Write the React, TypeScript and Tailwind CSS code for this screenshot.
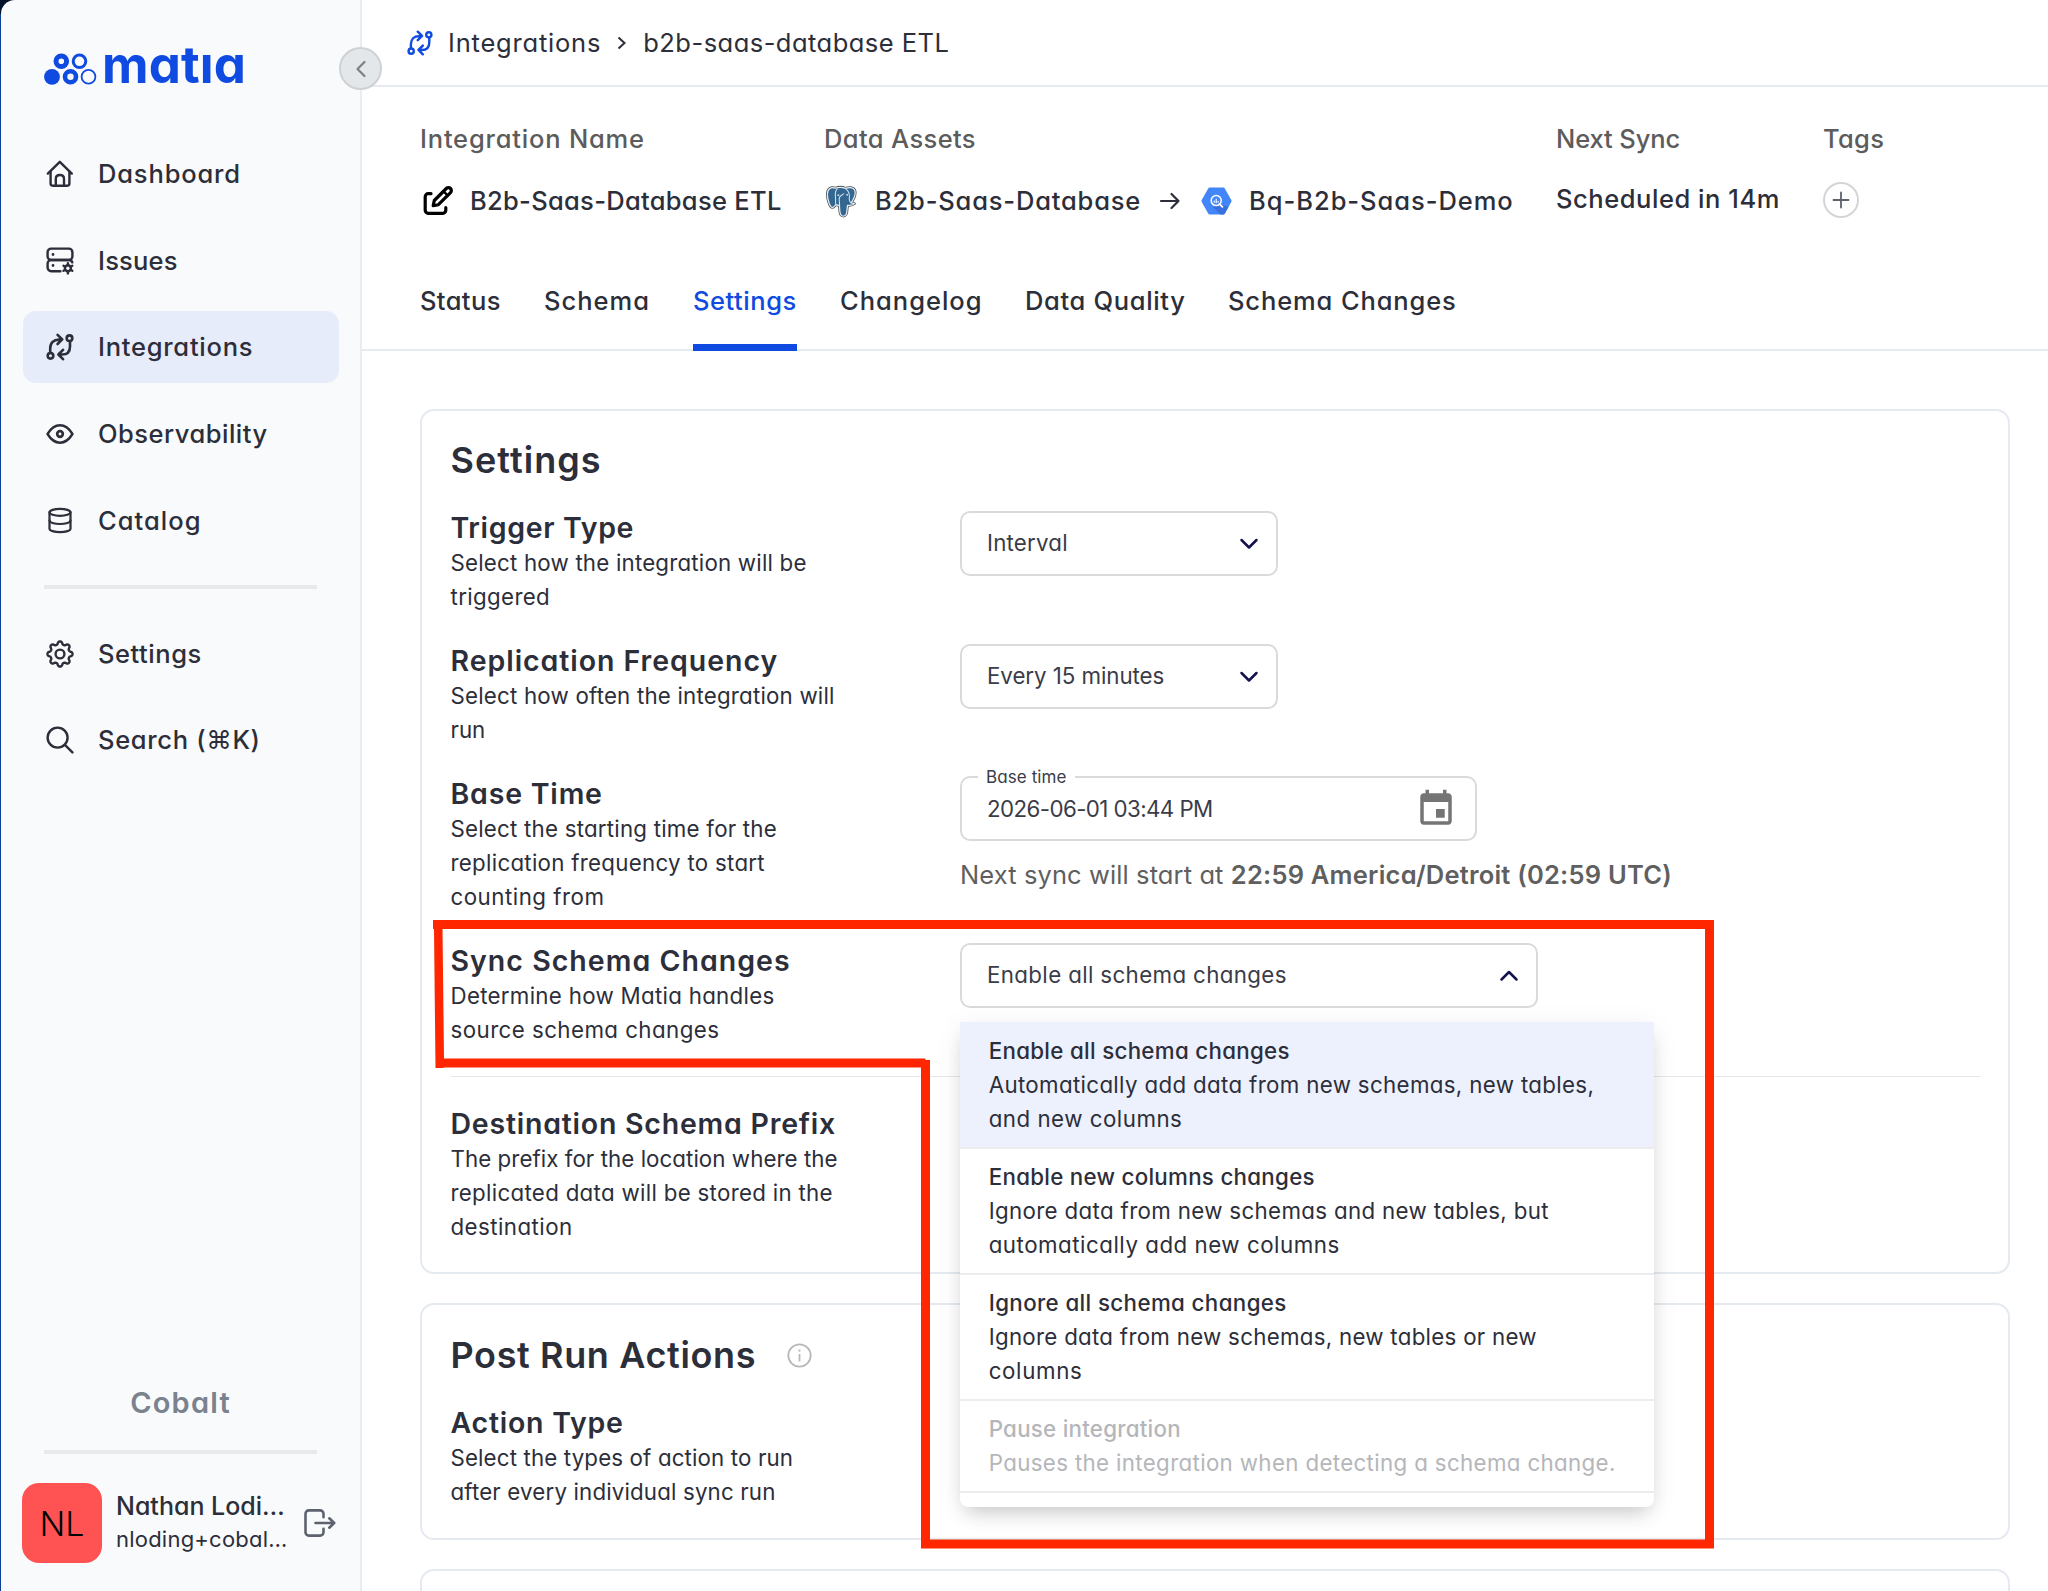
import React from "react";
import { Database } from "lucide-react";

type IconProps = { className?: string };

const stroke = {
  fill: "none",
  stroke: "currentColor",
  strokeWidth: 2.4,
  strokeLinecap: "round" as const,
  strokeLinejoin: "round" as const,
};

function HomeIcon() {
  return (
    <svg width="28" height="28" viewBox="0 0 28 28" {...stroke}>
      <path d="M1.8 13.6 13.8 1.8l12 11.8" />
      <path d="M4.6 11.6v12q0 2.1 2.1 2.1h14.6q2.1 0 2.1-2.1v-12" />
      <path d="M9.8 25.5v-6.6q0-3.9 4.1-3.9t4.1 3.9v6.6" />
    </svg>
  );
}

function IssuesIcon() {
  return (
    <svg width="28" height="28" viewBox="0 0 28 28" {...stroke}>
      <rect x="1.6" y="1.6" width="24.8" height="11.4" rx="3.6" />
      <path d="M14.4 24.2H5.2a3.6 3.6 0 0 1-3.6-3.6v-4a3.6 3.6 0 0 1 3.6-3.6h17.6c1.8 0 3.1 1 3.5 2.4" />
      <path d="M7 7.4v.1M7 18.5v.1" strokeWidth="2.8" />
      <circle cx="21.9" cy="21.3" r="3" strokeWidth="2.4" />
      <path d="M21.9 16.2v2M21.9 24.4v2M17.5 18.8l1.7 1M24.6 22.8l1.7 1M17.5 23.8l1.7-1M24.6 19.8l1.7-1" strokeWidth="2.4" />
    </svg>
  );
}

function IntegrationsIcon({ className = "size-7" }: IconProps) {
  return (
    <svg className={className} viewBox="0 0 28 28" {...stroke} strokeWidth={2.6}>
      <circle cx="4.5" cy="22.8" r="2.8" />
      <circle cx="23.5" cy="5.2" r="2.8" />
      <path d="M4.2 19.6v-4.2c0-5.6 3.4-8.8 8.8-8.8h2.4M11.6 1.8l4.6 4.6-4.6 4.6" />
      <path d="M24 8.4v5c0 5.2-3 8.1-8 8.1h-3.4M17 16.8l-4.6 4.7 4.6 4.7" />
    </svg>
  );
}

function EyeIcon() {
  return (
    <svg width="28" height="28" viewBox="0 0 28 28" {...stroke}>
      <path d="M1.5 14C5 8.3 9.3 5.3 14 5.3S23 8.3 26.5 14C23 19.7 18.7 22.7 14 22.7S5 19.7 1.5 14Z" />
      <circle cx="14" cy="14" r="2.8" strokeWidth="2.7" />
    </svg>
  );
}

function gearPath(): string {
  const points: string[] = [];
  for (let i = 0; i < 160; i++) {
    const a = (i / 160) * Math.PI * 2;
    const wave = Math.tanh(Math.cos(a * 8) * 1.4);
    const r = 11.1 + wave * 1.6;
    points.push(`${(14 + r * Math.cos(a)).toFixed(2)} ${(14 + r * Math.sin(a)).toFixed(2)}`);
  }
  return `M${points.join("L")}Z`;
}

function GearIcon() {
  return (
    <svg width="28" height="28" viewBox="0 0 28 28" {...stroke}>
      <path d={gearPath()} />
      <circle cx="14" cy="14" r="4.4" />
    </svg>
  );
}

function SearchIcon() {
  return (
    <svg width="28" height="28" viewBox="0 0 28 28" {...stroke}>
      <circle cx="11.6" cy="11.6" r="10" />
      <path d="m18.9 18.9 7.5 7.5" />
    </svg>
  );
}

function LogoutIcon() {
  return (
    <svg width="32" height="28" viewBox="0 0 32 28" {...stroke} strokeWidth={2.6}>
      <path d="M19.5 8.2V4.7a3.3 3.3 0 0 0-3.3-3.3H4.8a3.3 3.3 0 0 0-3.3 3.3v18.6a3.3 3.3 0 0 0 3.3 3.3h11.4a3.3 3.3 0 0 0 3.3-3.3v-3.5" />
      <path d="M11.5 14h18.7M25.300 9.300 30.200 14l-4.900 4.700" />
    </svg>
  );
}

function EditIcon() {
  return (
    <svg className="text-black" width="34" height="34" viewBox="0 0 34 34" {...stroke} strokeWidth={3.2}>
      <path d="M10 9.7H7.200a3 3 0 0 0-3 3v13.600a3 3 0 0 0 3 3h14.600a3 3 0 0 0 3-3v-2.600" />
      <path d="M12.200 21.700 13.300 16.500 25.300 4.500a2.900 2.900 0 0 1 4.200 4.200L17.400 20.700Z" />
      <path d="m22.600 7.400 4 4" strokeWidth="2.400" />
    </svg>
  );
}

function LogoMark() {
  return (
    <svg width="53" height="33" viewBox="0 0 53 33" fill="none" stroke="#0f4be0">
      <circle cx="17.3" cy="8.3" r="5.3" strokeWidth="5" />
      <circle cx="35.5" cy="8.3" r="6.3" strokeWidth="3" />
      <circle cx="8" cy="23.8" r="7.9" fill="#0f4be0" stroke="none" />
      <circle cx="26.5" cy="23.8" r="5.5" strokeWidth="4.6" />
      <circle cx="44.5" cy="23.8" r="6.9" strokeWidth="1.8" />
    </svg>
  );
}

function Chevron({ up = false }: { up?: boolean }) {
  return (
    <svg width="20" height="12" viewBox="0 0 20 12" fill="none" stroke="#14124d" strokeWidth="2.5" strokeLinecap="round" strokeLinejoin="round">
      <path d={up ? "M2.5 9.5 10 2l7.5 7.5" : "M2.5 2 10 9.5 17.5 2"} />
    </svg>
  );
}

function BigQueryIcon() {
  return (
    <svg width="31" height="28" viewBox="0 0 31 28">
      <path d="M8.7.5h13.6q1 0 1.500.9l6.500 11.700q.5.9 0 1.800l-6.500 11.700q-.5.9-1.500.9H8.700q-1 0-1.500-.9L.7 14.900q-.5-.9 0-1.800L7.200 1.400Q7.700.5 8.700.5Z" fill="#4386fa" />
      <path d="m19 17 8.500 3-3.700 6.600q-.5.9-1.500.9h-3L12 20Z" fill="#3871dd" />
      <circle cx="15.200" cy="13.600" r="5" fill="none" stroke="#fff" strokeWidth="1.500" />
      <path d="M13.300 13.500v2.300M15.200 11.800v4.400M17.100 14v1.700" stroke="#fff" strokeWidth="1.100" />
      <path d="m18.900 17.300 2.500 2.600" stroke="#fff" strokeWidth="1.800" strokeLinecap="round" />
    </svg>
  );
}

const elephant =
  "M9.500 2.600C5.500 1 1.800 3 1.800 8.500c0 5 2.500 12.800 4.800 12.800 1.500 0 2.400-1.600 3.600-2.900.8.6 2 .9 3.300.7.3 3-.2 8.500 2 9.900 2 1.200 4.500.5 5-2.500l.8-7.300c2.500.2 5.500-.3 6.700-1.600-.6-.8-2.200-.5-3.200-.8 2.500-3.700 4.700-9.300 3.500-12.300-1.300-3-5.700-3-8.800-1.700C16.500 1.500 12.500 1.500 9.500 2.600Z";

function PostgresIcon() {
  return (
    <svg width="32" height="33" viewBox="-.5 -.5 31 32" strokeLinejoin="round" strokeLinecap="round">
      <path d={elephant} fill="none" stroke="#4b4f55" strokeWidth="2.7" />
      <path d={elephant} fill="#336791" stroke="#e6edf3" strokeWidth="1.2" />
      <path
        d="M11.300 3.400c-2.600 2.400-2 6-1.600 8.600.4 3-.6 4.700.5 6.300M19.200 2.800c3 2.400 4.300 5.200 3.900 8.200-.4 3-.5 4.400 1.600 5.600M13.600 18.900c.2-2.700-.9-5.200-.1-7.300.9-2.300 3-2.300 4.100-3.600"
        fill="none"
        stroke="#dce6ee"
        strokeWidth="1"
      />
      <path d="M12 9.300h.8M20.600 9h.8" stroke="#fff" strokeWidth="1.300" />
    </svg>
  );
}

type NavEntry = { label: React.ReactNode; id: string; icon: React.ReactNode; track: string; active?: boolean };

const navItems: NavEntry[] = [
  { id: "dashboard", label: "Dashboard", icon: <HomeIcon />, track: "tracking-[0.85px]" },
  { id: "issues", label: "Issues", icon: <IssuesIcon />, track: "tracking-[0.2px]" },
  { id: "integrations", label: "Integrations", icon: <IntegrationsIcon />, track: "tracking-[0.75px]", active: true },
  { id: "observability", label: "Observability", icon: <EyeIcon />, track: "tracking-[0.5px]" },
  { id: "catalog", label: "Catalog", icon: <Database className="size-[31px]" strokeWidth={1.9} />, track: "tracking-[1.05px]" },
];

const utilityItems: NavEntry[] = [
  { id: "settings", label: "Settings", icon: <GearIcon />, track: "tracking-[0.55px]" },
  {
    id: "search",
    label: (
      <>
        Search (<span className="font-normal">⌘</span>K)
      </>
    ),
    icon: <SearchIcon />,
    track: "tracking-[0.67px]",
  },
];

function NavItem({ label, icon, track, active }: NavEntry) {
  return (
    <div className={`flex h-[71.7px] items-center rounded-[13px] pl-[23.5px] ${active ? "bg-[#e7ecfb]" : ""}`}>
      <span className="flex w-7 shrink-0 justify-center">{icon}</span>
      <span className={`ml-[24px] text-[25.5px] font-medium leading-8 ${track}`}>{label}</span>
    </div>
  );
}

function Sidebar() {
  return (
    <aside className="relative flex h-full w-[361px] shrink-0 flex-col rounded-tl-[14px] border-r-2 border-[#ebecee] bg-[#f9fafc] pl-[21.5px] pr-[21.5px] text-[#2c2e3a]">
      <div className="flex h-[138px] items-start pl-[21.5px] pt-[39px]">
        <span className="mt-[13.5px]">
          <LogoMark />
        </span>
        <span className="ml-[5px] text-[51px] font-bold leading-[52px] tracking-[0.15px] text-[#0f4be0]">matıa</span>
      </div>
      <nav className="flex flex-col gap-[15px]">
        {navItems.map((item) => (
          <NavItem key={item.id} {...item} />
        ))}
      </nav>
      <div className="mx-[21.5px] mb-[29px] mt-[28.5px] h-1 bg-[#e7e9ea]" />
      <nav className="flex flex-col gap-[15px]">
        {utilityItems.map((item) => (
          <NavItem key={item.id} {...item} />
        ))}
      </nav>
      <div className="mt-auto text-center text-[29px] font-semibold leading-9 tracking-[1.2px] text-[#7a828d]">Cobalt</div>
      <div className="mx-[21.5px] mb-[29px] mt-[29px] h-1 bg-[#e7e9ea]" />
      <div className="mb-7 flex h-20 items-center">
        <div className="-ml-[0.5px] flex size-20 shrink-0 items-center justify-center rounded-[17px] bg-[#ff5353] text-[34px] font-light text-black">
          NL
        </div>
        <div className="-mt-[2px] ml-[14px] w-[176px] shrink-0">
          <div className="text-[25px] font-medium leading-8">Nathan Lodi…</div>
          <div className="mt-px text-[22px] leading-8 tracking-[0.22px]">nloding+cobal…</div>
        </div>
        <span className="ml-[12px] shrink-0 text-[#5d636e]">
          <LogoutIcon />
        </span>
      </div>
      <button className="absolute -right-[22px] top-[47px] z-10 flex size-[43px] items-center justify-center rounded-full border-2 border-[#cfd2d5] bg-[#e4e7ea]">
        <svg width="12" height="18" viewBox="0 0 12 18" fill="none" stroke="#7b7f86" strokeWidth="2.2" strokeLinecap="round" strokeLinejoin="round">
          <path d="M9.5 2 2.5 9l7 7" />
        </svg>
      </button>
    </aside>
  );
}

const tabs = [
  { label: "Status", layout: "w-[81px] mr-[43px] tracking-[0.4px]" },
  { label: "Schema", layout: "w-[106px] mr-[43px] tracking-[1px]" },
  { label: "Settings", layout: "w-[104px] mr-[43px] tracking-[0.55px]", active: true },
  { label: "Changelog", layout: "w-[142px] mr-[43px] tracking-[1px]" },
  { label: "Data Quality", layout: "w-[160px] mr-[43px] tracking-[0.66px]" },
  { label: "Schema Changes", layout: "w-[230px] tracking-[0.88px]" },
];

function Header() {
  return (
    <>
      <div className="flex h-[87px] items-center border-b-2 border-[#e6ebf1] pl-[45px] text-[25.5px] leading-8">
        <IntegrationsIcon className="size-[26px] text-[#0f4be0]" />
        <span className="ml-[15px] tracking-[0.8px]">Integrations</span>
        <svg className="mx-4" width="10" height="14" viewBox="0 0 10 14" fill="none" stroke="#2c2e3a" strokeWidth="2">
          <path d="m1.5 1.5 6 5.5-6 5.5" />
        </svg>
        <span className="tracking-[0.47px]">b2b-saas-database ETL</span>
      </div>
      <div className="grid grid-cols-[405px_732px_266px_auto] pl-[58px] pt-9 text-[25.5px] font-medium leading-8">
        <span className="tracking-[0.8px] text-[#5c5c5c]">Integration Name</span>
        <span className="-ml-px tracking-[0.38px] text-[#5c5c5c]">Data Assets</span>
        <span className="-ml-px tracking-[-0.1px] text-[#5c5c5c]">Next Sync</span>
        <span className="tracking-[0.35px] text-[#5c5c5c]">Tags</span>
        <div className="mt-7 flex h-9 items-center">
          <span className="ml-px">
            <EditIcon />
          </span>
          <span className="ml-[15px] tracking-[0.3px]">B2b-Saas-Database ETL</span>
        </div>
        <div className="mt-7 flex h-9 items-center">
          <PostgresIcon />
          <span className="ml-[18px] tracking-[0.82px]">B2b-Saas-Database</span>
          <svg className="ml-[18px]" width="22" height="20" viewBox="0 0 22 20" {...stroke} strokeWidth={2.2}>
            <path d="M2 10h17.5M12.5 3l7 7-7 7" />
          </svg>
          <span className="ml-5">
            <BigQueryIcon />
          </span>
          <span className="ml-[17px] tracking-[0.96px]">Bq-B2b-Saas-Demo</span>
        </div>
        <div className="-ml-px mt-[26px] flex h-9 items-center tracking-[0.55px]">Scheduled in 14m</div>
        <div className="mt-[27px] flex size-9 items-center justify-center rounded-full border-2 border-[#d3d5d9]">
          <svg width="18" height="18" viewBox="0 0 18 18" stroke="#5d636e" strokeWidth="1.8" strokeLinecap="round">
            <path d="M9 1.5v15M1.5 9h15" />
          </svg>
        </div>
      </div>
      <div className="mt-[66px] flex h-[66px] border-b-2 border-[#e6ebf1] pl-[58px] text-[25.5px] font-medium leading-8">
        {tabs.map((tab) => (
          <div
            key={tab.label}
            className={`h-[66px] shrink-0 ${tab.layout} ${tab.active ? "border-b-7 border-[#0f4be0] text-[#0f4be0]" : ""}`}
          >
            {tab.label}
          </div>
        ))}
      </div>
    </>
  );
}

type Line = { text: string; track: string };

type RowProps = { title: string; track: string; lines: Line[]; children?: React.ReactNode };

function Row({ title, track, lines, children }: RowProps) {
  return (
    <div className="flex">
      <div className="w-[509px] shrink-0">
        <div className={`-ml-[0.5px] text-[28.5px] font-semibold leading-9 ${track}`}>{title}</div>
        <div className="-ml-[0.5px] text-[22.3px] leading-[34px]">
          {lines.map((line) => (
            <div key={line.text} className={line.track}>
              {line.text}
            </div>
          ))}
        </div>
      </div>
      <div>{children}</div>
    </div>
  );
}

function Select({ value, layout, open }: { value: string; layout: string; open?: boolean }) {
  return (
    <div
      className={`flex h-[65px] items-center justify-between rounded-[10px] border-2 border-[#dadada] bg-white pl-[25px] pr-[17px] text-[22.3px] text-[#3a3c48] ${layout}`}
    >
      <span className="-mt-px">{value}</span>
      <Chevron up={open} />
    </div>
  );
}

function DateField() {
  return (
    <div className="relative flex h-[65px] w-[517px] items-center justify-between rounded-[10px] border-2 border-[#dadada] pl-[25px] pr-[18px] text-[22.3px] text-[#3a3c48]">
      <span className="absolute left-4 top-[-13px] bg-white px-2 text-[17px] leading-6 tracking-[0.1px]">Base time</span>
      <span className="tracking-[-0.58px]">2026-06-01 03:44 PM</span>
      <svg width="42" height="42" viewBox="0 0 24 24" fill="#757575">
        <path d="M17 12h-5v5h5v-5zM16 1v2H8V1H6v2H5c-1.110 0-1.990.9-1.990 2L3 19c0 1.100.89 2 2 2h14c1.100 0 2-.9 2-2V5c0-1.100-.9-2-2-2h-1V1h-2zm3 18H5V8h14v11z" />
      </svg>
    </div>
  );
}

const options = [
  {
    title: "Enable all schema changes",
    track: "tracking-[0.31px]",
    lines: [
      { text: "Automatically add data from new schemas, new tables,", track: "tracking-[0.34px]" },
      { text: "and new columns", track: "tracking-[0.5px]" },
    ],
    tone: "bg-[#edf0fd] pt-3",
  },
  {
    title: "Enable new columns changes",
    track: "tracking-[0.29px]",
    lines: [
      { text: "Ignore data from new schemas and new tables, but", track: "tracking-[0.34px]" },
      { text: "automatically add new columns", track: "tracking-[0.52px]" },
    ],
    tone: "pt-[11px]",
  },
  {
    title: "Ignore all schema changes",
    track: "tracking-[0.39px]",
    lines: [
      { text: "Ignore data from new schemas, new tables or new", track: "tracking-[0.28px]" },
      { text: "columns", track: "tracking-[0.65px]" },
    ],
    tone: "pt-[11px]",
  },
  {
    title: "Pause integration",
    track: "tracking-[0.26px]",
    lines: [{ text: "Pauses the integration when detecting a schema change.", track: "tracking-[0.35px]" }],
    tone: "pt-[11px] text-[#b5b6ba]",
  },
];

function SchemaMenu() {
  return (
    <div className="absolute left-0 top-[79px] z-10 w-[694px] rounded-b-lg bg-white pb-[14px] text-[22.3px] leading-[34px] shadow-[0_10px_20px_-6px_rgba(0,0,0,0.2),0_4px_30px_rgba(0,0,0,0.06)]">
      {options.map((option) => (
        <div key={option.title} className={`border-b-2 border-[#ececee] pb-[11px] pl-[28.7px] ${option.tone}`}>
          <div className={`font-medium ${option.track}`}>{option.title}</div>
          {option.lines.map((line) => (
            <div key={line.text} className={line.track}>
              {line.text}
            </div>
          ))}
        </div>
      ))}
    </div>
  );
}

function Card({ children, className = "" }: { children?: React.ReactNode; className?: string }) {
  return (
    <section className={`w-[1590px] rounded-[14px] border-2 border-[#e5eaf1] px-[29px] ${className}`}>{children}</section>
  );
}

function HighlightOutline() {
  return (
    <svg className="pointer-events-none absolute left-0 top-0 z-20" width="2048" height="1591" viewBox="0 0 2048 1591" fill="#ff2600">
      <path
        d="M433 920H1714V1548.5H921V1067.5H443.5V1068H435.5L434 929H433ZM442.5 929 444 1058.5H925.5V1060H930V1539.5H1705V929Z"
        fillRule="evenodd"
      />
    </svg>
  );
}

export default function App() {
  return (
    <div className="relative flex h-[1591px] w-[2048px] overflow-hidden whitespace-nowrap bg-[#0f3f92] pl-px font-['Inter',sans-serif] text-[#2c2e3a] [font-feature-settings:'cv11']">
      <div className="absolute left-0 top-0 size-3.5 bg-[#06122b]" />
      <Sidebar />
      <main className="min-w-0 flex-1 bg-white">
        <Header />
        <div className="flex flex-col gap-[29px] pl-[58px] pt-[58px]">
          <Card className="h-[865px] pt-[27px]">
            <h1 className="-ml-[0.5px] text-[36px] font-semibold leading-[44px] tracking-[1.05px]">Settings</h1>
            <div className="mt-7 flex flex-col gap-[29px]">
              <Row
                title="Trigger Type"
                track="tracking-[0.66px]"
                lines={[
                  { text: "Select how the integration will be", track: "tracking-[0.2px]" },
                  { text: "triggered", track: "tracking-[0.35px]" },
                ]}
              >
                <Select value="Interval" layout="w-[318px] mt-px tracking-[0.2px]" />
              </Row>
              <Row
                title="Replication Frequency"
                track="tracking-[0.95px]"
                lines={[
                  { text: "Select how often the integration will", track: "tracking-[0.2px]" },
                  { text: "run", track: "" },
                ]}
              >
                <Select value="Every 15 minutes" layout="w-[318px] mt-px tracking-[-0.05px]" />
              </Row>
              <Row
                title="Base Time"
                track="tracking-[0.8px]"
                lines={[
                  { text: "Select the starting time for the", track: "tracking-[0.22px]" },
                  { text: "replication frequency to start", track: "tracking-[0.28px]" },
                  { text: "counting from", track: "tracking-[0.5px]" },
                ]}
              >
                <DateField />
                <div className="mt-[18px] text-[25.5px] leading-8 tracking-[0.1px] text-[#5f5f5f]">
                  Next sync will start at{" "}
                  <b className="font-semibold tracking-[0.22px]">22:59 America/Detroit (02:59 UTC)</b>
                </div>
              </Row>
              <Row
                title="Sync Schema Changes"
                track="tracking-[1.03px]"
                lines={[
                  { text: "Determine how Matia handles", track: "tracking-[0.29px]" },
                  { text: "source schema changes", track: "tracking-[0.44px]" },
                ]}
              >
                <div className="relative">
                  <Select value="Enable all schema changes" layout="w-[578px] tracking-[0.37px]" open />
                  <SchemaMenu />
                </div>
              </Row>
              <div className="-mr-px h-px bg-[#e6e6e9]" />
              <Row
                title="Destination Schema Prefix"
                track="tracking-[0.77px]"
                lines={[
                  { text: "The prefix for the location where the", track: "tracking-[0.06px]" },
                  { text: "replicated data will be stored in the", track: "tracking-[0.3px]" },
                  { text: "destination", track: "tracking-[0.45px]" },
                ]}
              />
            </div>
          </Card>
          <Card className="h-[237px] pt-7">
            <div className="flex items-center">
              <h2 className="-ml-[0.5px] text-[36px] font-semibold leading-[44px] tracking-[0.63px]">Post Run Actions</h2>
              <svg className="ml-[31px]" width="25" height="25" viewBox="0 0 25 25" fill="none" stroke="#b9b9b9" strokeWidth="1.8">
                <circle cx="12.5" cy="12.5" r="11.2" />
                <path d="M12.5 11v7.5M12.5 6.5v2.2" />
              </svg>
            </div>
            <div className="mt-7">
              <Row
                title="Action Type"
                track="tracking-[0.75px]"
                lines={[
                  { text: "Select the types of action to run", track: "tracking-[0.14px]" },
                  { text: "after every individual sync run", track: "tracking-[0.16px]" },
                ]}
              />
            </div>
          </Card>
          <Card className="h-[200px]" />
        </div>
      </main>
      <HighlightOutline />
    </div>
  );
}
